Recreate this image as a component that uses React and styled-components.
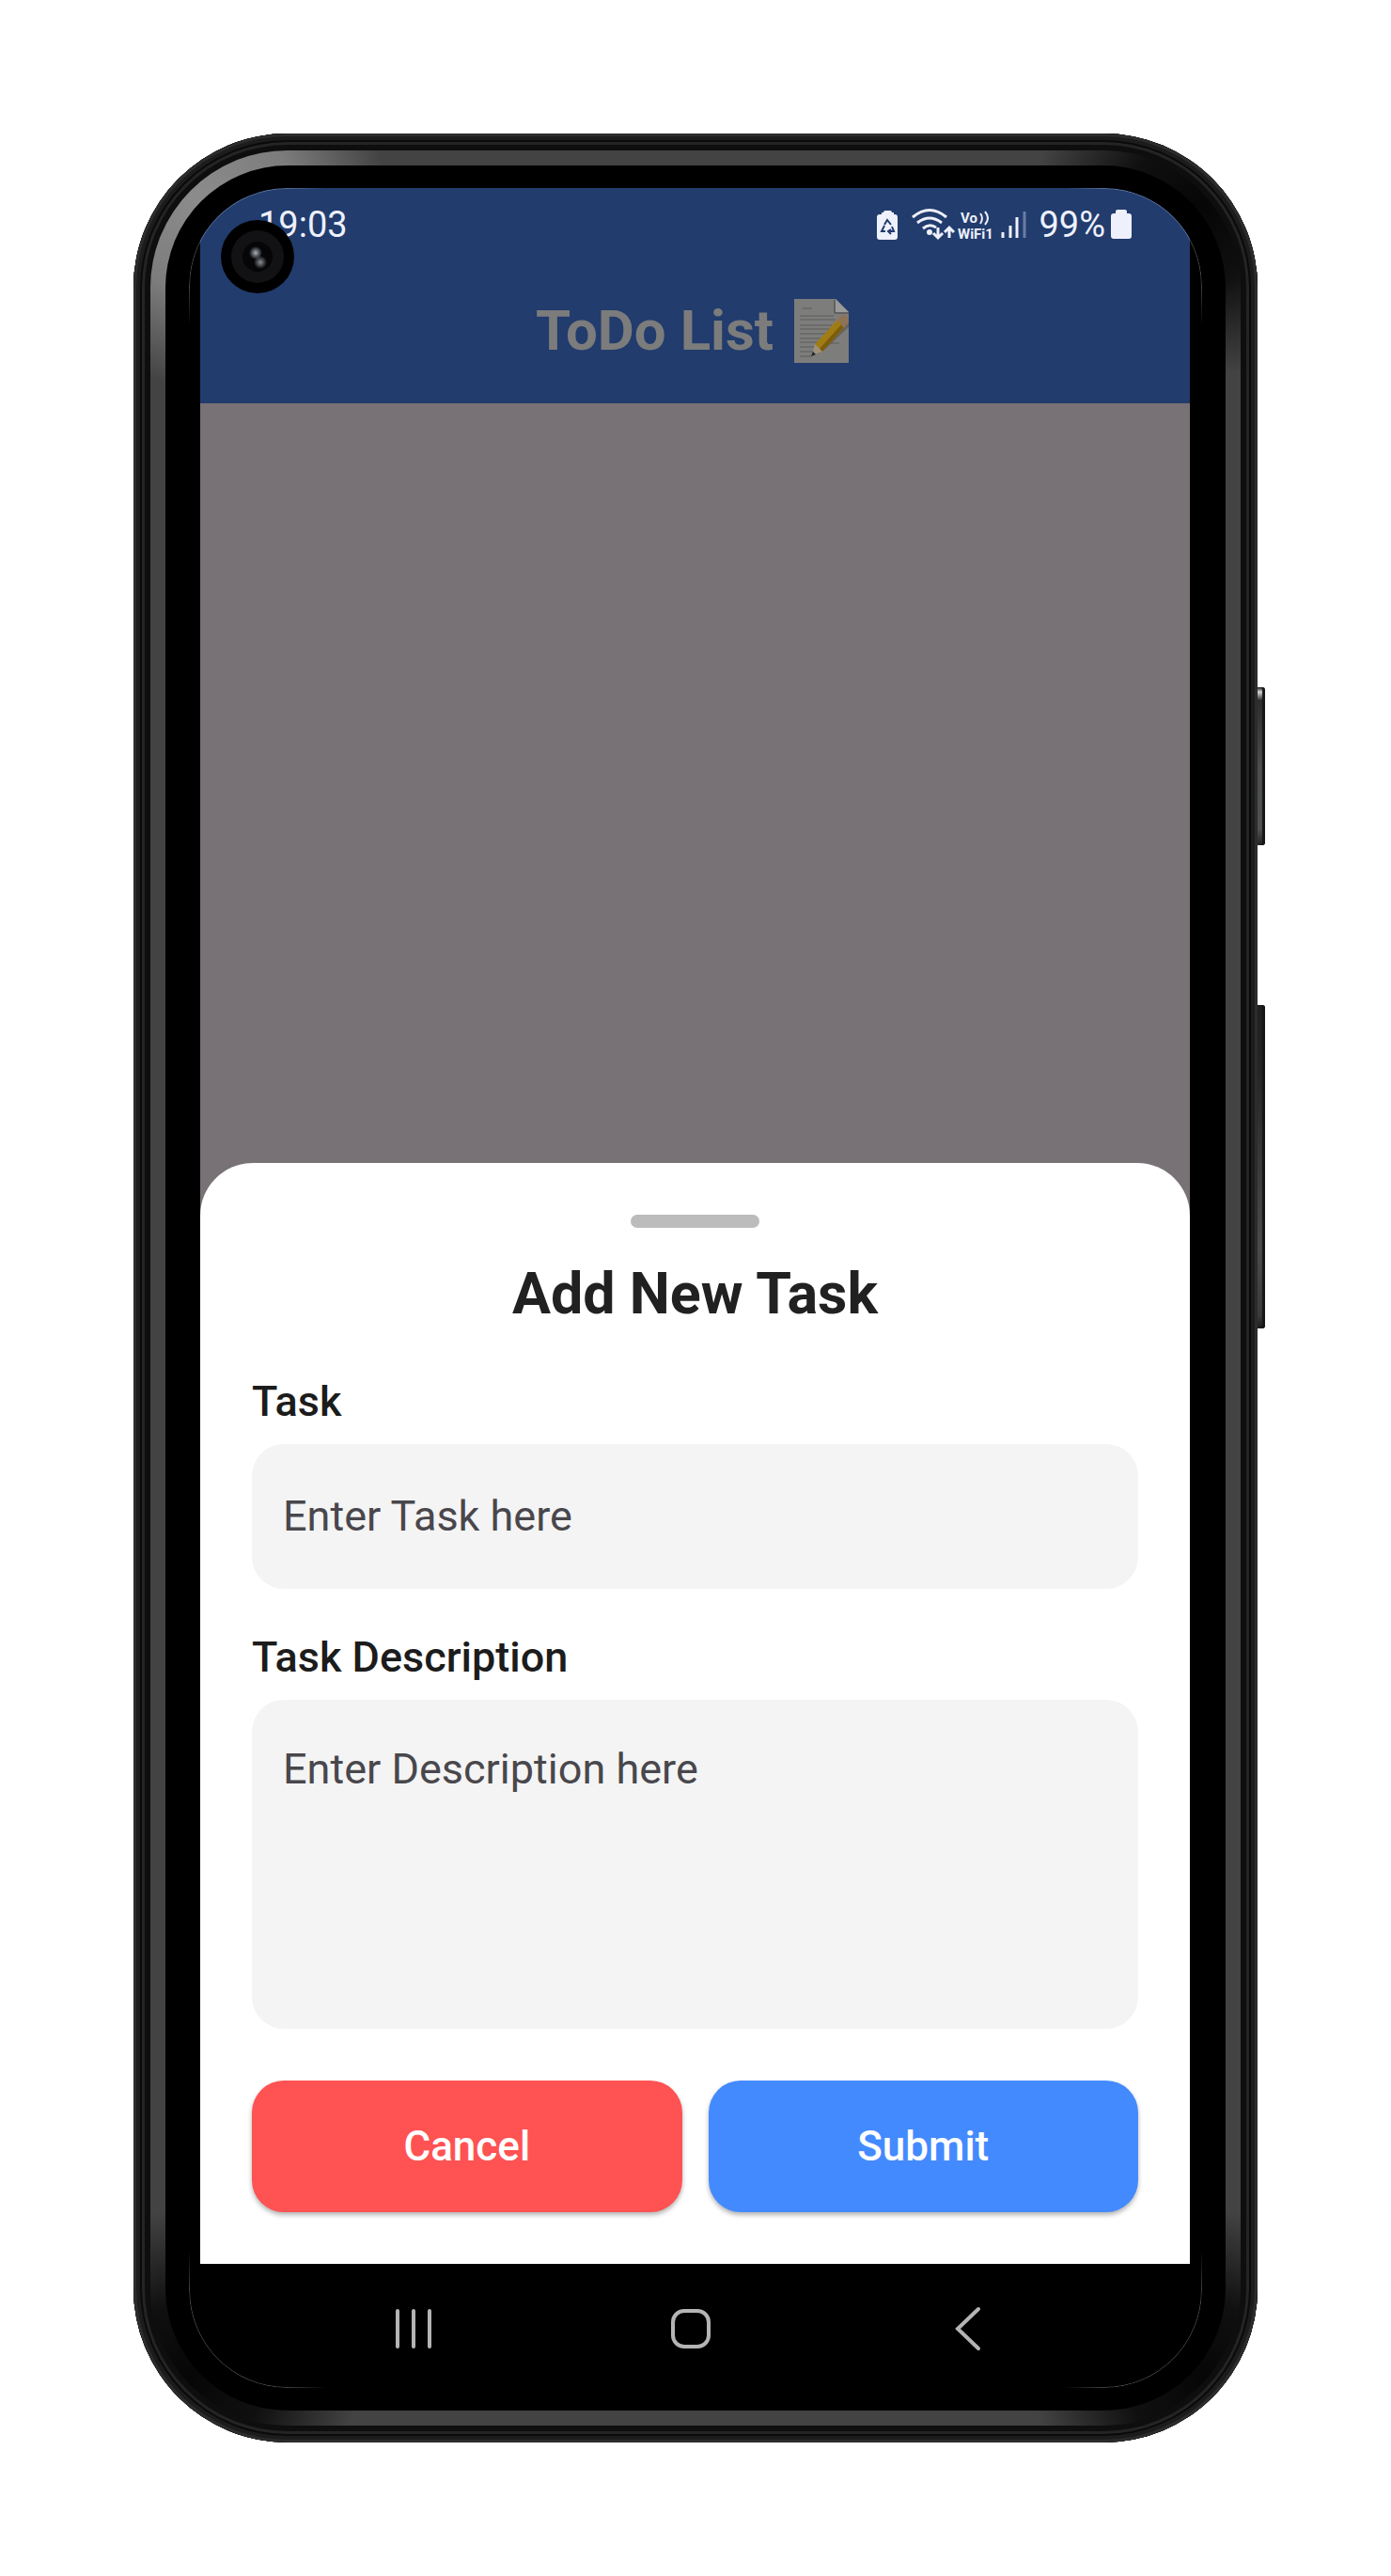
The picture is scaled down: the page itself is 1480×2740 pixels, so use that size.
import React from "react";
import styled, { createGlobalStyle } from "styled-components";

const GlobalStyle = createGlobalStyle`
  *, *::before, *::after { box-sizing: border-box; }
  body { margin: 0; background: #fff; font-family: Roboto, "Liberation Sans", sans-serif; }
  button, input, textarea { font-family: inherit; }
`;

const Page = styled.main`
  display: flex;
  justify-content: center;
  padding: 142px;
`;

const Body = styled.div`
  position: relative;
  flex: 1;
  max-width: 1196px;
  padding: 18px;
  border-radius: 164px;
  background: #141414;
  box-shadow:
    inset 0 0 0 3px #2c2c2c,
    inset 0 0 0 7px #1c1c1c,
    inset 0 0 0 9px #0a0a0a,
    inset 0 0 0 12px #242424,
    inset 0 0 0 18px #0e0e0e;
`;

const SideKey = styled.span`
  position: absolute;
  left: 100%;
  top: ${(p) => p.$top}px;
  width: 8px;
  height: ${(p) => p.$height}px;
  border-radius: 0 3px 3px 0;
  background: ${(p) =>
    p.$lit
      ? "linear-gradient(180deg, #1c1c1c 0, #d8d8d8 5px, #8a8a8a 9px, #2c2c2c 14px, #4c4d4f 50%, #505153 90%, #222 100%)"
      : "linear-gradient(180deg, #1e1f20 0, #242526 20%, #4a4b4d 75%, #3a3b3c 96%, #1c1c1c 100%)"};
  box-shadow: inset -3px 0 1px #161616;
`;

const Rim = styled.div`
  padding: 16px;
  border-radius: 146px;
  background:
    radial-gradient(circle 200px at 50px 50px, #8c8c8c 0, #7c7c7c 50%, transparent 100%),
    radial-gradient(circle 180px at calc(100% - 40px) 60px, #060606 0, #101010 45%, transparent 100%),
    radial-gradient(circle 180px at 40px calc(100% - 50px), #060606 0, #101010 45%, transparent 100%),
    radial-gradient(circle 180px at calc(100% - 40px) calc(100% - 50px), #060606 0, #101010 45%, transparent 100%),
    #434343;
`;

const Bezel = styled.div`
  padding: 24px 25px;
  border-radius: 130px;
  background: #000;
`;

const Display = styled.div`
  position: relative;
  overflow: hidden;
  padding: 0 13px 0 12px;
  border-radius: 104px;
  background: #000;

  &::after {
    content: "";
    position: absolute;
    inset: 0;
    border: 1px solid rgba(255, 255, 255, 0.3);
    border-radius: 104px;
    mask:
      radial-gradient(circle 120px at 30px 30px, #000 60%, transparent),
      radial-gradient(circle 120px at calc(100% - 30px) 30px, #000 60%, transparent),
      radial-gradient(circle 120px at 30px calc(100% - 30px), #000 60%, transparent),
      radial-gradient(circle 120px at calc(100% - 30px) calc(100% - 30px), #000 60%, transparent);
    pointer-events: none;
  }
`;

const Header = styled.header`
  height: 229px;
  background: #213c6d;
`;

const StatusBar = styled.div`
  display: flex;
  justify-content: space-between;
  align-items: center;
  height: 78px;
  padding: 0 62px;
  color: #eef0fb;
  font-size: 38px;
  line-height: 46px;
`;

const StatusIcons = styled.div`
  display: flex;
  align-items: center;
`;

const StatusGlyphs = styled.svg`
  display: block;
  width: 166px;
  height: 36px;
  margin-right: 8px;
`;

const CallType = styled.text`
  font-size: 15px;
  font-weight: 700;
`;

const Battery = styled.svg`
  display: block;
  width: 22px;
  height: 32px;
  margin-left: 6px;
`;

const AppTitle = styled.h1`
  display: flex;
  justify-content: center;
  align-items: center;
  gap: 22px;
  height: 148px;
  margin: 0;
  padding-right: 6px;
  color: #7c7c7c;
  font-size: 60px;
  font-weight: 700;
  line-height: 72px;
`;

const Memo = styled.svg`
  display: block;
  width: 58px;
  height: 70px;
`;

const Backdrop = styled.div`
  padding-top: 808px;
  background: #787276;
`;

const Sheet = styled.form`
  display: flex;
  flex-direction: column;
  padding: 55px;
  border-radius: 56px 56px 0 0;
  background: #fff;
`;

const Grabber = styled.span`
  align-self: center;
  width: 137px;
  height: 14px;
  border-radius: 7px;
  background: #bcbcbc;
`;

const SheetTitle = styled.h2`
  margin: 34px 0 0;
  color: #212121;
  font-size: 61px;
  font-weight: 700;
  line-height: 72px;
  text-align: center;
`;

const Label = styled.label`
  margin-top: ${(p) => p.$gap}px;
  color: #1c1c1c;
  font-size: 45px;
  font-weight: 500;
  line-height: 52px;
`;

const fieldStyle = `
  display: block;
  width: 100%;
  margin: 19px 0 0;
  border: 0;
  border-radius: 34px;
  outline: 0;
  background: #f4f4f4;
  color: #1c1c1c;
  font-size: 45px;
  line-height: 52px;
  &::placeholder { color: #49474c; opacity: 1; }
`;

const TextField = styled.input`
  ${fieldStyle}
  height: 154px;
  padding: 0 33px 2px;
`;

const TextArea = styled.textarea`
  ${fieldStyle}
  height: 350px;
  padding: 48px 33px;
  resize: none;
`;

const Actions = styled.div`
  display: grid;
  grid-template-columns: 1fr 1fr;
  gap: 28px;
  margin-top: 55px;
`;

const ActionButton = styled.button`
  height: 140px;
  padding: 0;
  border: 0;
  border-radius: 34px;
  background: ${(p) => p.$color};
  box-shadow: 0 3px 5px rgba(0, 0, 0, 0.3);
  color: #fff;
  font-size: 44px;
  font-weight: 500;
  line-height: 52px;
`;

const NavBar = styled.nav`
  display: flex;
  justify-content: space-between;
  height: 132px;
  padding: 0 204px 0 195px;
`;

const NavButton = styled.button`
  display: grid;
  place-items: center;
  width: 64px;
  height: 138px;
  padding: 0;
  border: 0;
  background: transparent;
  color: #b4b4b4;
`;

const Camera = styled.svg`
  position: absolute;
  left: 34px;
  top: 34px;
  width: 78px;
  height: 78px;
`;

export default function App() {
  return (
    <Page>
      <GlobalStyle />
      <Body>
        <SideKey $top={589} $height={168} $lit />
        <SideKey $top={927} $height={344} />
        <Rim>
          <Bezel>
            <Display>
              <Header>
                <StatusBar>
                  <time>19:03</time>
                  <StatusIcons>
                    <StatusGlyphs viewBox="0 0 166 36" fill="none" stroke="#eef0fb" aria-hidden="true">
                      <path fill="#eef0fb" stroke="none" d="M7 7V5h2q0-2 2-2h5q2 0 2 2h2v2h1q3 0 3 3v21q0 3-3 3H5q-3 0-3-3V10q0-3 3-3z" />
                      <g stroke="#213c6d" strokeWidth="2">
                        <path d="M10 18l3-5 4 5M18 20l2 5h-5M11 25H7l3-6" />
                        <path d="M17 23l-3 2 3 3" />
                      </g>
                      <g strokeWidth="3">
                        <path d="M40 10Q58-5 76 10" />
                        <path d="M45 16Q58 6 71 16" />
                        <path d="M51 22Q58 16 65 21" />
                      </g>
                      <circle cx="58" cy="26" r="3" fill="#eef0fb" stroke="none" />
                      <path strokeWidth="3" d="M67 21v11M62 27l5 5 5-5M79 32V21M74 26l5-5 5 5" />
                      <g fill="#eef0fb" stroke="none">
                        <CallType x="91" y="16">Vo</CallType>
                        <CallType x="88" y="33">WiFi1</CallType>
                      </g>
                      <path strokeWidth="2" d="M112 6q4 5 0 11M117 4q6 7 0 14" />
                      <path strokeWidth="3" d="M136 26v6M144 19v13M151 10v22" />
                      <path strokeWidth="3" stroke="#6b7ca3" d="M159 4v28" />
                    </StatusGlyphs>
                    <span>99%</span>
                    <Battery viewBox="0 0 22 32" aria-hidden="true">
                      <path fill="#eef0fb" d="M5 4V2q0-2 2-2h8q2 0 2 2v2h2q3 0 3 3v21q0 3-3 3H3q-3 0-3-3V7q0-3 3-3z" />
                    </Battery>
                  </StatusIcons>
                </StatusBar>
                <AppTitle>
                  ToDo List
                  <Memo viewBox="0 0 58 70" aria-hidden="true">
                    <path fill="#7d7d7b" d="M0 1h44l14 14v54H0z" />
                    <path fill="#9a9a98" d="M44 1l14 14H44z" />
                    <path fill="none" stroke="#444" d="M43 2v14h15" />
                    <path
                      stroke="#5c5c5c"
                      strokeWidth="1"
                      d="M9 11h10M6 19h36M6 23h38M6 29h34M6 33h32M6 38h29M6 43h24M6 47h22M6 52h16M6 57h14M6 62h13M34 48h14"
                    />
                    <path fill="#55534e" opacity=".6" d="M24 60l34-34v5L32 55z" />
                    <path fill="#a07c14" d="M22 49l26-28 8 7-26 29z" />
                    <path fill="#7d5c0c" d="M27 54l26-29 3 3-26 29z" />
                    <path fill="#8f7358" d="M46 23l5-5q8 0 7 8l-5 6z" />
                    <path fill="#a0917a" d="M22 49l8 8-11 4z" />
                    <path fill="#222" d="M20 57l3 3-5 2z" />
                  </Memo>
                </AppTitle>
              </Header>
              <Backdrop>
                <Sheet onSubmit={(e) => e.preventDefault()}>
                  <Grabber />
                  <SheetTitle>Add New Task</SheetTitle>
                  <Label htmlFor="task" $gap={53}>Task</Label>
                  <TextField id="task" placeholder="Enter Task here" />
                  <Label htmlFor="description" $gap={47}>Task Description</Label>
                  <TextArea id="description" placeholder="Enter Description here" />
                  <Actions>
                    <ActionButton type="button" $color="#ff5252">Cancel</ActionButton>
                    <ActionButton type="submit" $color="#448aff">Submit</ActionButton>
                  </Actions>
                </Sheet>
              </Backdrop>
              <NavBar>
                <NavButton type="button" aria-label="Recent apps">
                  <svg width="44" height="46" viewBox="0 0 44 46" stroke="currentColor" strokeWidth="4" strokeLinecap="round">
                    <path d="M5 4v38M22 4v38M39 4v38" />
                  </svg>
                </NavButton>
                <NavButton type="button" aria-label="Home">
                  <svg width="46" height="46" viewBox="0 0 46 46" fill="none" stroke="currentColor" strokeWidth="4">
                    <rect x="4" y="4" width="38" height="38" rx="12" />
                  </svg>
                </NavButton>
                <NavButton type="button" aria-label="Back">
                  <svg width="30" height="48" viewBox="0 0 30 48" fill="none" stroke="currentColor" strokeWidth="4" strokeLinecap="round">
                    <path d="M26 3L4 24l22 21" />
                  </svg>
                </NavButton>
              </NavBar>
              <Camera viewBox="0 0 78 78" aria-hidden="true">
                <defs>
                  <radialGradient id="glint">
                    <stop offset="0" stopColor="#a9b2b8" />
                    <stop offset="1" stopColor="#a9b2b8" stopOpacity="0" />
                  </radialGradient>
                </defs>
                <circle cx="39" cy="39" r="39" fill="#000" />
                <circle cx="39" cy="39" r="28" fill="#121214" />
                <circle cx="39" cy="39" r="16" fill="#060608" />
                <circle cx="37" cy="35" r="7" fill="url(#glint)" />
                <circle cx="42" cy="45" r="7" fill="url(#glint)" opacity=".8" />
              </Camera>
            </Display>
          </Bezel>
        </Rim>
      </Body>
    </Page>
  );
}
